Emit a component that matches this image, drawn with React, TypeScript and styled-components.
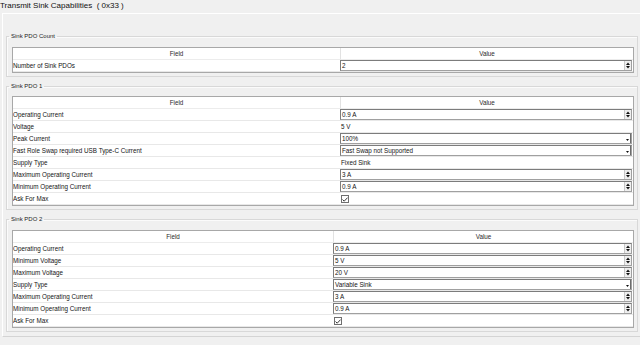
import { Fragment } from "react";
import styled, { createGlobalStyle } from "styled-components";

const GlobalStyle = createGlobalStyle`
  html, body {
    margin: 0;
    padding: 0;
    background: #f0f0f0;
  }
  body {
    font-family: "Liberation Sans", Arial, sans-serif;
    color: #141414;
  }
`

const Page = styled.div`
  width: 640px;
  height: 345px;
  overflow: hidden;
`

const Title = styled.div`
  height: 13px;
  line-height: 12px;
  font-size: 8px;
  white-space: pre;
  color: #111;
`

const Frame = styled.div`
  margin-left: 2px;
  border-left: 1px solid #ffffff;
  border-top: 1px solid #ffffff;
  border-bottom: 1px solid #d4d4d4;
  padding: 19px 0 4px 3px;
  display: flex;
  flex-direction: column;
  gap: 6px;
`

const Group = styled.fieldset<{ $pad: number }>`
  margin: 0 2px 0 0;
  padding: ${p => p.$pad}px 3px 3px 5px;
  border: 1px solid #d8d8d8;
  box-shadow: inset 1px 1px 0 #fbfbfb;
  min-width: 0;
`

const Legend = styled.legend`
  font-size: 6px;
  line-height: 7px;
  padding: 0 2px;
  margin-left: -3px;
  color: #1a1a1a;
`

const Table = styled.div<{ $field: number }>`
  display: grid;
  grid-template-columns: ${p => p.$field}px 1fr;
  background: #ffffff;
  border: 1px solid #a8a8a8;
  font-size: 6.3px;
`

const HeadCell = styled.div<{ $divider?: boolean }>`
  height: 12px;
  line-height: 12px;
  text-align: center;
  box-sizing: border-box;
  border-bottom: 1px solid #ececec;
  border-left: ${p => (p.$divider ? "1px solid #e2e2e2" : "none")};
  color: #2a2a2a;
`

const FieldCell = styled.div`
  height: 12px;
  line-height: 11px;
  box-sizing: border-box;
  border-bottom: 1px solid #e8e8e8;
  white-space: nowrap;
  overflow: hidden;
`

const ValueCell = styled.div`
  height: 12px;
  box-sizing: border-box;
  border-bottom: 1px solid #e8e8e8;
  display: flex;
  align-items: flex-start;
  padding-right: 1px;
`

const PlainValue = styled.span`
  line-height: 11px;
  padding-left: 1px;
`

const Box = styled.div`
  flex: 1;
  height: 11px;
  box-sizing: border-box;
  display: flex;
  align-items: stretch;
  background: #ffffff;
  border: 1px solid #a0a0a0;
  border-top-color: #7c7c7c;
  border-left-color: #7c7c7c;
`

const BoxText = styled.span`
  flex: 1;
  line-height: 9px;
  padding-left: 1px;
  white-space: nowrap;
`

const SpinButtons = styled.div`
  width: 6px;
  background: #efefef;
  border-left: 1px solid #c8c8c8;
  display: flex;
  align-items: center;
  justify-content: center;
`

const DropArrow = styled.div`
  width: 6px;
  border-right: 1px solid #6c6c6c;
  display: flex;
  align-items: flex-end;
  justify-content: center;
  padding-bottom: 2px;
  box-sizing: border-box;
`

const CheckBox = styled.div`
  width: 8px;
  height: 8px;
  margin: 2px 0 0 1px;
  box-sizing: border-box;
  border: 1px solid #6f6f6f;
  background: #fff;
  display: flex;
  align-items: center;
  justify-content: center;
`

type Value =
  | { kind: "spin"; text: string }
  | { kind: "select"; text: string }
  | { kind: "text"; text: string }
  | { kind: "check" }

type Row = { field: string; value: Value }

const Spin = ({ text }: { text: string }) => (
  <Box>
    <BoxText>{text}</BoxText>
    <SpinButtons>
      <svg width="4" height="7" viewBox="0 0 4 7">
        <path d="M2 0.5 L4 3 L0 3 Z" fill="#111" />
        <path d="M0 4 L4 4 L2 6.5 Z" fill="#111" />
      </svg>
    </SpinButtons>
  </Box>
)

const Select = ({ text }: { text: string }) => (
  <Box>
    <BoxText>{text}</BoxText>
    <DropArrow>
      <svg width="3" height="2" viewBox="0 0 3 2">
        <path d="M0 0 L3 0 L1.5 2 Z" fill="#111" />
      </svg>
    </DropArrow>
  </Box>
)

const renderValue = (v: Value) => {
  if (v.kind === "spin") return <Spin text={v.text} />
  if (v.kind === "select") return <Select text={v.text} />
  if (v.kind === "text") return <PlainValue>{v.text}</PlainValue>
  return (
    <CheckBox>
      <svg width="6" height="5" viewBox="0 0 6 5">
        <path d="M0.5 2.5 L2.2 4.2 L5.6 0.6" stroke="#222" strokeWidth="0.9" fill="none" />
      </svg>
    </CheckBox>
  )
}

const countRows: Row[] = [
  { field: "Number of Sink PDOs", value: { kind: "spin", text: "2" } },
]

const pdo1Rows: Row[] = [
  { field: "Operating Current", value: { kind: "spin", text: "0.9 A" } },
  { field: "Voltage", value: { kind: "text", text: "5 V" } },
  { field: "Peak Current", value: { kind: "select", text: "100%" } },
  { field: "Fast Role Swap required USB Type-C Current", value: { kind: "select", text: "Fast Swap not Supported" } },
  { field: "Supply Type", value: { kind: "text", text: "Fixed Sink" } },
  { field: "Maximum Operating Current", value: { kind: "spin", text: "3 A" } },
  { field: "Minimum Operating Current", value: { kind: "spin", text: "0.9 A" } },
  { field: "Ask For Max", value: { kind: "check" } },
]

const pdo2Rows: Row[] = [
  { field: "Operating Current", value: { kind: "spin", text: "0.9 A" } },
  { field: "Minimum Voltage", value: { kind: "spin", text: "5 V" } },
  { field: "Maximum Voltage", value: { kind: "spin", text: "20 V" } },
  { field: "Supply Type", value: { kind: "select", text: "Variable Sink" } },
  { field: "Maximum Operating Current", value: { kind: "spin", text: "3 A" } },
  { field: "Minimum Operating Current", value: { kind: "spin", text: "0.9 A" } },
  { field: "Ask For Max", value: { kind: "check" } },
]

const SettingsTable = ({ rows, field }: { rows: Row[]; field: number }) => (
  <Table $field={field}>
    <HeadCell>Field</HeadCell>
    <HeadCell $divider>Value</HeadCell>
    {rows.map((r, i) => (
      <Fragment key={i}>
        <FieldCell>{r.field}</FieldCell>
        <ValueCell>{renderValue(r.value)}</ValueCell>
      </Fragment>
    ))}
  </Table>
)

const App = () => {
  return (
    <Page>
      <GlobalStyle />
      <Title>Transmit Sink Capabilities  ( 0x33 )</Title>
      <Frame>
        <Group $pad={7}>
          <Legend>Sink PDO Count</Legend>
          <SettingsTable rows={countRows} field={327} />
        </Group>
        <Group $pad={6}>
          <Legend>Sink PDO 1</Legend>
          <SettingsTable rows={pdo1Rows} field={327} />
        </Group>
        <Group $pad={7}>
          <Legend>Sink PDO 2</Legend>
          <SettingsTable rows={pdo2Rows} field={320} />
        </Group>
      </Frame>
    </Page>
  );
};

export default App;
